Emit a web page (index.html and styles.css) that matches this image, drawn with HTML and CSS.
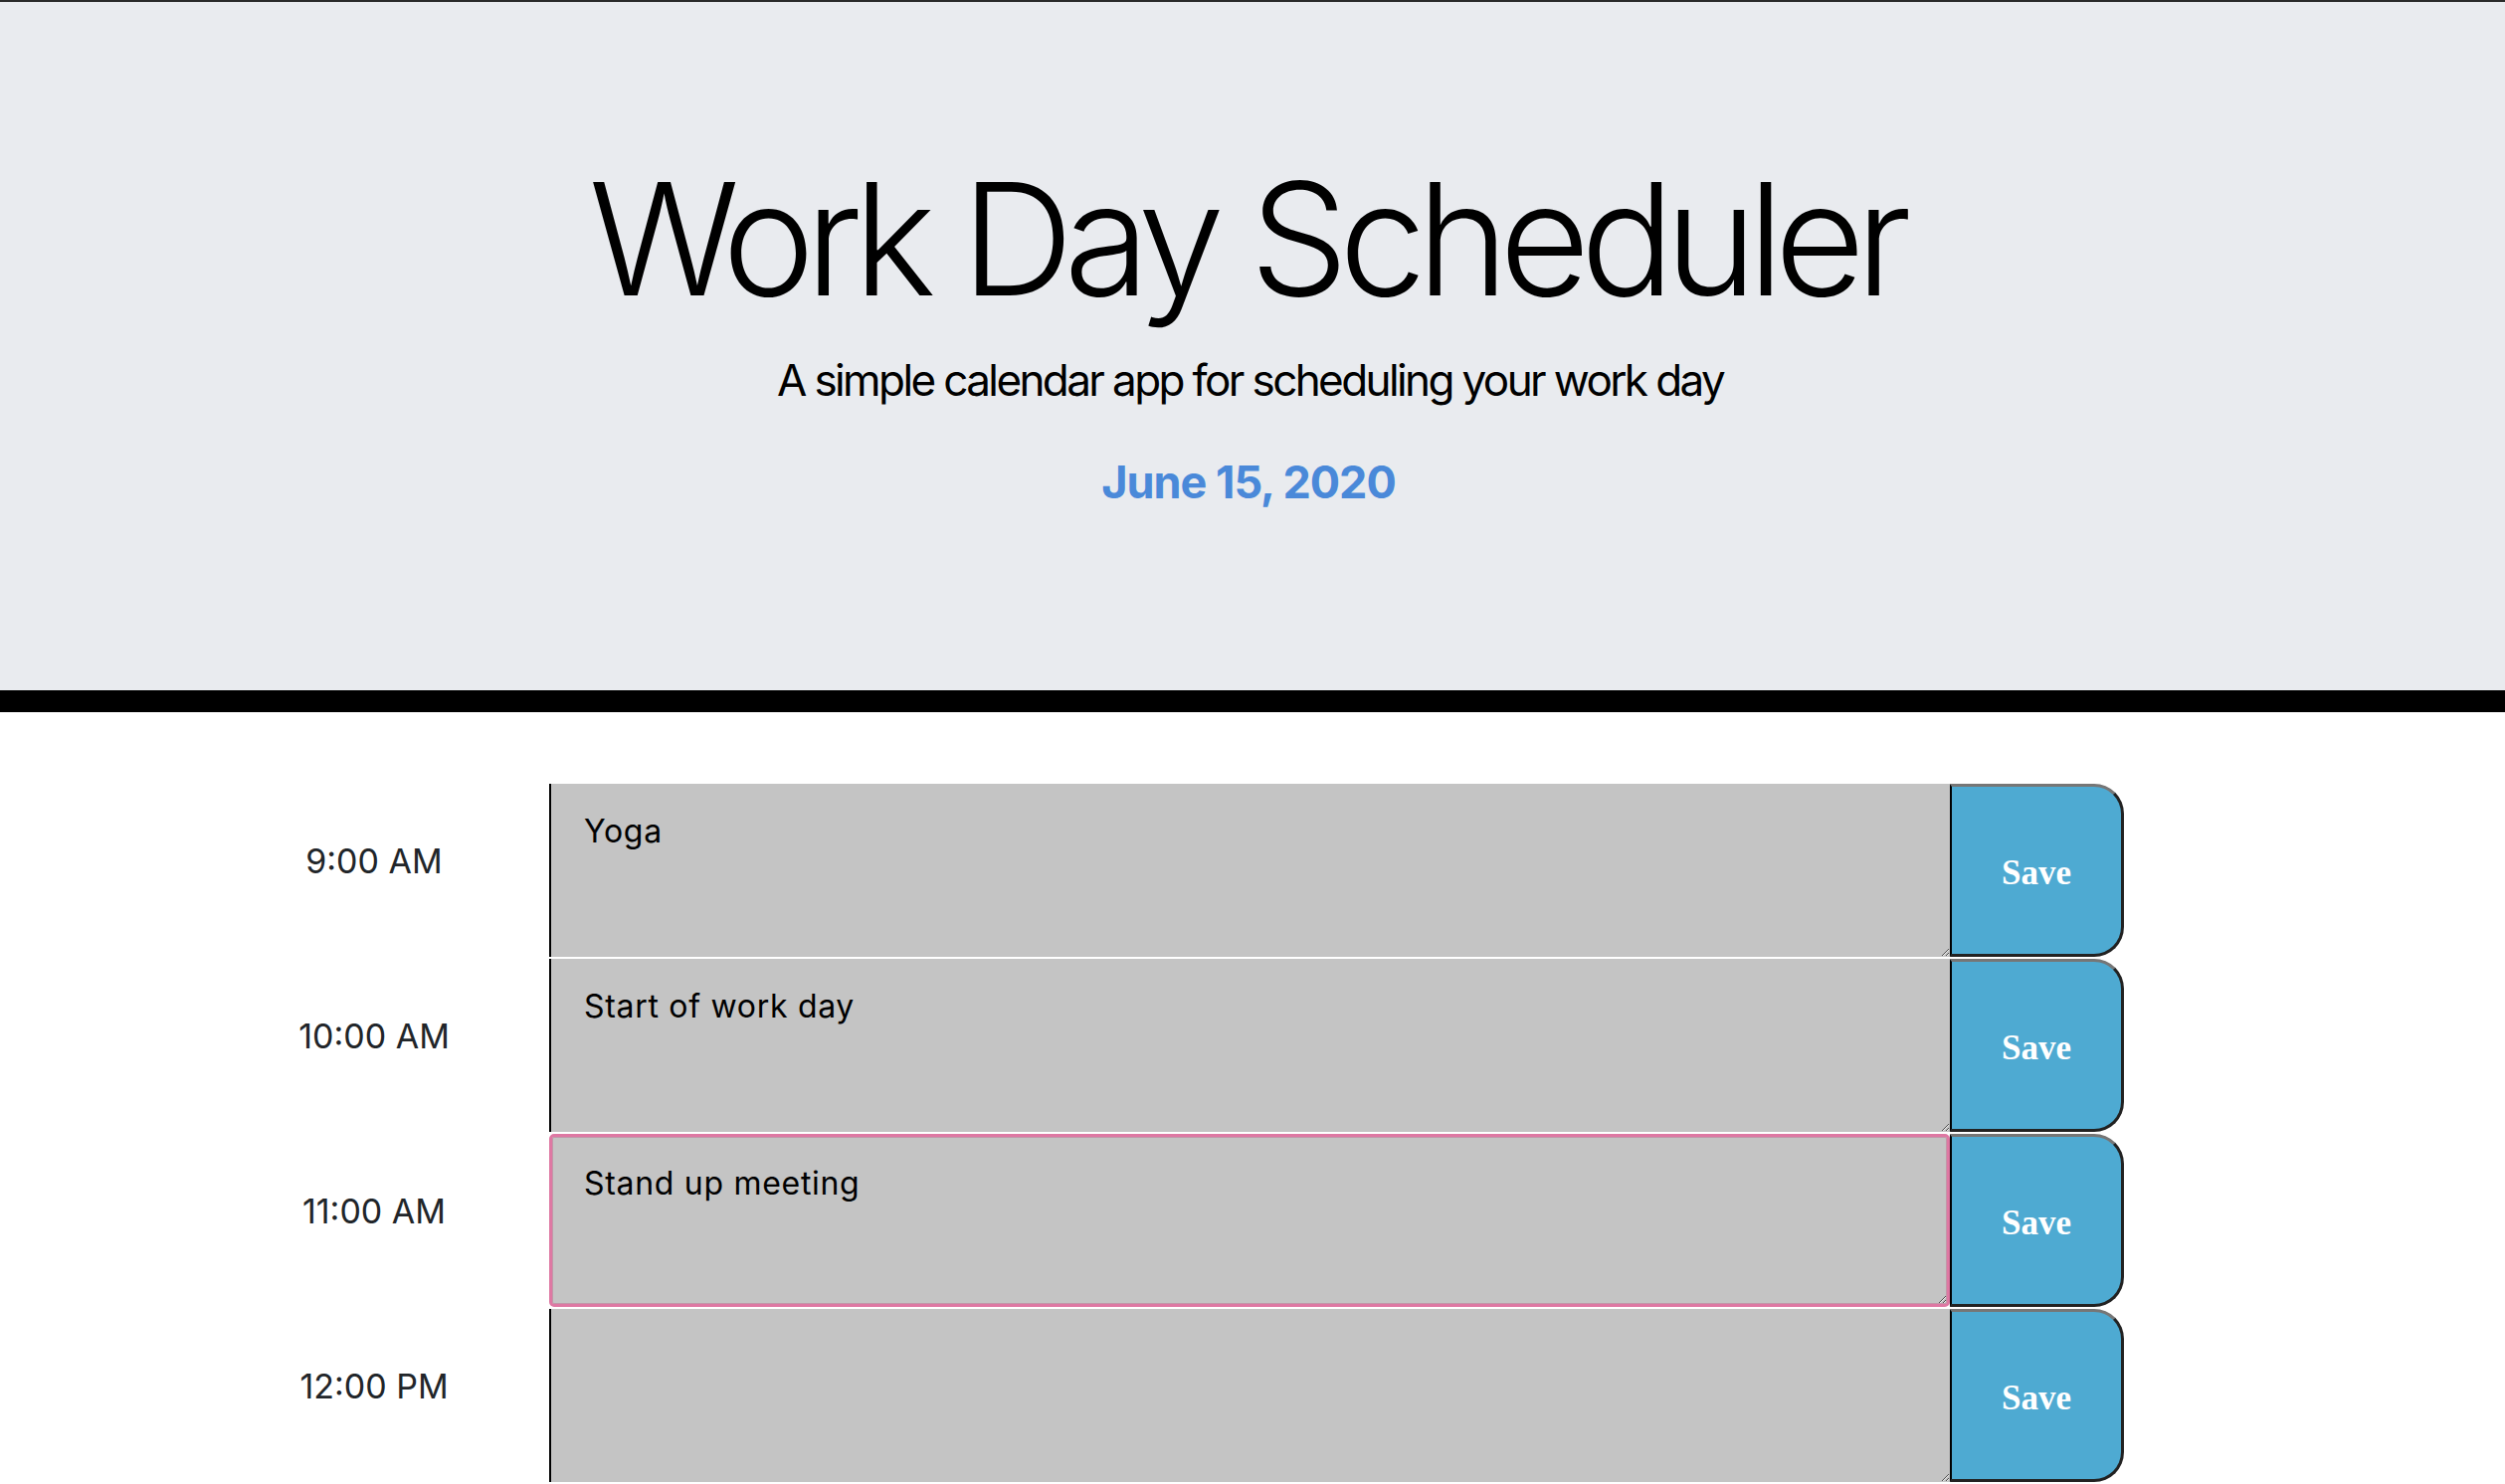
FILE: index.html
```html
<!DOCTYPE html>
<html lang="en">
<head>
<meta charset="utf-8">
<title>Work Day Scheduler</title>
<link rel="stylesheet" href="styles.css">
</head>
<body>
<header class="jumbotron">
  <h1 class="title">Work Day Scheduler</h1>
  <p class="lead">A simple calendar app for scheduling your work day</p>
  <p class="current-day">June 15, 2020</p>
</header>
<main class="schedule">
  <div class="time-block">
    <div class="hour">9:00 AM</div>
    <textarea class="description">Yoga</textarea>
    <button class="save-btn">Save</button>
  </div>
  <div class="time-block">
    <div class="hour">10:00 AM</div>
    <textarea class="description">Start of work day</textarea>
    <button class="save-btn">Save</button>
  </div>
  <div class="time-block">
    <div class="hour">11:00 AM</div>
    <textarea class="description present">Stand up meeting</textarea>
    <button class="save-btn">Save</button>
  </div>
  <div class="time-block">
    <div class="hour">12:00 PM</div>
    <textarea class="description"></textarea>
    <button class="save-btn">Save</button>
  </div>
</main>
</body>
</html>
```
FILE: styles.css
```css
html, body {
  margin: 0;
  padding: 0;
  background: #ffffff;
  font-family: Inter, "Liberation Sans", sans-serif;
}

.jumbotron {
  border-top: 2px solid #2a2a2a;
  border-bottom: 22px solid #000000;
  background: #e9ebef;
  height: 716px;
  box-sizing: border-box;
  padding-top: 160px;
  text-align: center;
  color: #000;
}

.title {
  margin: 0;
  padding-right: 14px;
  font-size: 157px;
  font-weight: 300;
  line-height: 1;
  letter-spacing: -9.5px;
}

.lead {
  margin: 41px 0 0;
  padding-right: 5px;
  font-size: 44px;
  font-weight: 400;
  line-height: 1;
  letter-spacing: -2.6px;
}

.current-day {
  margin: 58px 0 0;
  padding-right: 8px;
  font-size: 45px;
  font-weight: 700;
  line-height: 1;
  color: #4a89d9;
  letter-spacing: -1px;
}

.schedule {
  padding: 70px 0 0 200px;
}

.time-block {
  display: grid;
  grid-template-columns: 352px 1408px 175px;
  height: 176px;
  box-sizing: border-box;
  border-top: 2px solid #ffffff;
}

.hour {
  text-align: center;
  font-size: 34px;
  line-height: 1;
  padding-top: 61px;
  color: #212529;
}

.description {
  margin: 0;
  box-sizing: border-box;
  width: 100%;
  height: 174px;
  background: #c4c4c4;
  border: none;
  border-left: 2px solid #000000;
  border-radius: 0;
  padding: 29px 20px 0 33px;
  font-family: Inter, "Liberation Sans", sans-serif;
  font-size: 32px;
  line-height: 1.2;
  letter-spacing: 0.7px;
  color: #000000;
  outline: none;
}

.description.present {
  border: 3px solid #de78a3;
  border-radius: 5px;
  padding-left: 32px;
  padding-top: 28px;
  box-shadow: inset 0 0 0 1px rgba(190, 70, 120, 0.35);
}

.save-btn {
  margin: 0;
  height: 174px;
  background: #4eaad2;
  border-top: 3px solid #767676;
  border-right: 3px solid #222222;
  border-bottom: 3px solid #222222;
  border-left: 2px solid #000000;
  border-radius: 0 30px 30px 0;
  color: #ffffff;
  font-family: "Liberation Serif", "Times New Roman", serif;
  font-weight: 700;
  font-size: 35px;
  padding: 5px 0 0;
}
```
